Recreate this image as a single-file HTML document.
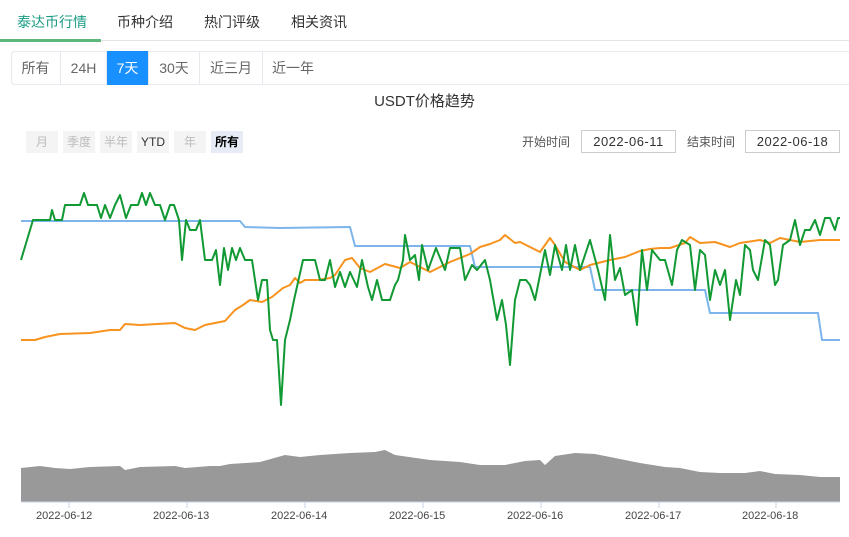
<!DOCTYPE html>
<html><head><meta charset="utf-8"><style>
*{margin:0;padding:0;box-sizing:border-box}
body{width:849px;height:537px;background:#fff;font-family:"Liberation Sans","Noto Sans CJK SC",sans-serif;position:relative;overflow:hidden;color:#333}
.a{position:absolute}
.tab{font-size:14px;top:12px;color:#333}
.seg{position:absolute;top:51px;height:34px;font-size:14px;line-height:34px;text-align:center;color:#666;border-right:1px solid #e8e8ee}
.b{position:absolute;top:131px;height:22px;font-size:12px;line-height:22px;text-align:center;background:#f4f4f4;color:#bbb}
.inp{position:absolute;top:130px;height:23px;border:1px solid #ccc;font-size:13px;line-height:21px;text-align:center;color:#333;letter-spacing:0.5px}
.lbl{position:absolute;top:133px;font-size:12px;color:#555}
.x{position:absolute;top:510px;font-size:11px;color:#444}
polyline{stroke-linejoin:round}
</style></head><body>
<div class="a tab" style="left:17px;color:#1a9c84">泰达币行情</div>
<div class="a tab" style="left:117px">币种介绍</div>
<div class="a tab" style="left:204px">热门评级</div>
<div class="a tab" style="left:291px">相关资讯</div>
<div class="a" style="left:0;top:40px;width:849px;height:1px;background:#e4e4e4"></div>
<div class="a" style="left:0;top:39px;width:101px;height:3px;background:#5cb87a"></div>
<div class="a" style="left:11px;top:51px;width:845px;height:34px;border:1px solid #e8e8ee;border-radius:4px"></div>
<div class="seg" style="left:11px;width:50px">所有</div>
<div class="seg" style="left:61px;width:46px">24H</div>
<div class="seg" style="left:107px;width:42px;background:#1890ff;color:#fff">7天</div>
<div class="seg" style="left:149px;width:51px">30天</div>
<div class="seg" style="left:200px;width:63px">近三月</div>
<div class="seg" style="left:263px;width:60px;border:none">近一年</div>
<div class="a" style="left:0;top:90px;width:849px;text-align:center;font-size:15px;color:#333">USDT价格趋势</div>
<div class="b" style="left:26px;width:32px">月</div>
<div class="b" style="left:63px;width:32px">季度</div>
<div class="b" style="left:100px;width:32px">半年</div>
<div class="b" style="left:137px;width:32px;color:#333">YTD</div>
<div class="b" style="left:174px;width:32px">年</div>
<div class="b" style="left:211px;width:32px;background:#e6ebf5;color:#000;font-weight:bold">所有</div>
<div class="lbl" style="left:522px">开始时间</div>
<div class="inp" style="left:581px;width:95px">2022-06-11</div>
<div class="lbl" style="left:687px">结束时间</div>
<div class="inp" style="left:745px;width:95px">2022-06-18</div>
<svg class="a" style="left:0;top:0" width="849" height="537">
<path d="M21 502 L21 468 L40 466 L55 468 L70 469 L90 467 L120 466 L125 470 L140 467 L175 466 L185 468 L210 466 L220 466 L230 464 L260 462 L285 455 L300 457 L320 455 L350 453 L375 452 L385 450 L395 455 L430 460 L460 462 L480 465 L505 465 L525 461 L540 460 L545 465 L555 456 L575 453 L595 454 L610 457 L640 463 L665 467 L680 468 L700 472 L720 473 L745 473 L760 471 L775 474 L800 475 L820 477 L840 477 L840 502 Z" fill="#999"/>
<line x1="21" y1="502" x2="840" y2="502" stroke="#c5d3e6"/>
<g stroke="#c5d3e6"><line x1="69" y1="502" x2="69" y2="508"/><line x1="187" y1="502" x2="187" y2="508"/><line x1="305" y1="502" x2="305" y2="508"/><line x1="423" y1="502" x2="423" y2="508"/><line x1="541" y1="502" x2="541" y2="508"/><line x1="659" y1="502" x2="659" y2="508"/><line x1="776" y1="502" x2="776" y2="508"/></g>
<polyline fill="none" stroke="#7cb5ec" stroke-width="2" points="21,221 240,221 245,227 280,228 350,227 355,246 470,246 475,267 590,267 595,290 705,290 710,313 818,313 822,340 840,340"/>
<polyline fill="none" stroke="#f7931e" stroke-width="2" points="21,340 35,340 45,337 60,334 90,333 110,330 120,330 125,324 140,325 175,323 185,328 195,330 205,325 225,321 235,310 243,305 250,300 262,302 272,297 283,288 290,285 295,278 300,283 305,280 318,280 330,278 335,275 345,260 352,258 360,268 370,272 385,264 400,268 410,262 430,272 450,262 470,254 480,247 490,244 500,240 505,235 515,243 520,242 530,247 540,252 550,238 555,245 565,262 580,270 590,265 610,260 625,257 640,251 650,249 660,248 670,248 685,243 690,237 700,243 715,242 730,247 740,243 760,240 770,243 780,238 800,242 820,240 840,240"/>
<polyline fill="none" stroke="#119933" stroke-width="2" points="21,260 33,220 50,220 52,210 55,220 62,220 65,205 80,205 84,193 88,205 97,205 101,218 105,205 110,218 115,205 120,195 126,218 131,205 138,205 142,193 146,205 150,193 155,205 160,205 165,220 170,205 174,205 179,220 182,260 186,220 190,230 196,230 200,220 205,260 212,260 216,250 220,285 224,248 228,270 232,248 236,260 240,248 245,260 252,260 258,300 262,280 267,280 270,330 273,340 277,340 281,405 285,340 290,320 294,300 303,260 315,260 320,280 325,280 330,260 335,287 340,272 345,287 350,272 357,287 362,260 368,287 372,300 377,280 382,300 390,300 395,285 398,280 403,260 405,235 410,260 415,255 419,280 422,245 428,270 436,248 445,270 450,248 460,248 465,280 472,265 477,270 485,260 490,280 497,320 502,300 506,325 510,365 515,300 520,280 526,280 530,285 535,300 540,275 545,250 550,275 555,245 562,270 566,245 570,270 575,245 580,270 590,240 598,270 605,300 610,235 615,280 620,268 625,295 632,290 637,325 642,250 647,290 652,250 660,260 665,260 672,285 677,250 682,240 690,245 695,290 700,250 705,255 710,300 715,270 720,285 725,270 730,320 736,280 740,295 745,245 750,250 753,270 758,280 765,240 770,245 775,285 778,280 783,245 790,240 795,220 800,245 805,230 810,230 815,220 820,235 825,218 830,218 835,230 838,218 840,218"/>
</svg>
<div class="x" style="left:36px">2022-06-12</div>
<div class="x" style="left:153px">2022-06-13</div>
<div class="x" style="left:271px">2022-06-14</div>
<div class="x" style="left:389px">2022-06-15</div>
<div class="x" style="left:507px">2022-06-16</div>
<div class="x" style="left:625px">2022-06-17</div>
<div class="x" style="left:742px">2022-06-18</div>
</body></html>
